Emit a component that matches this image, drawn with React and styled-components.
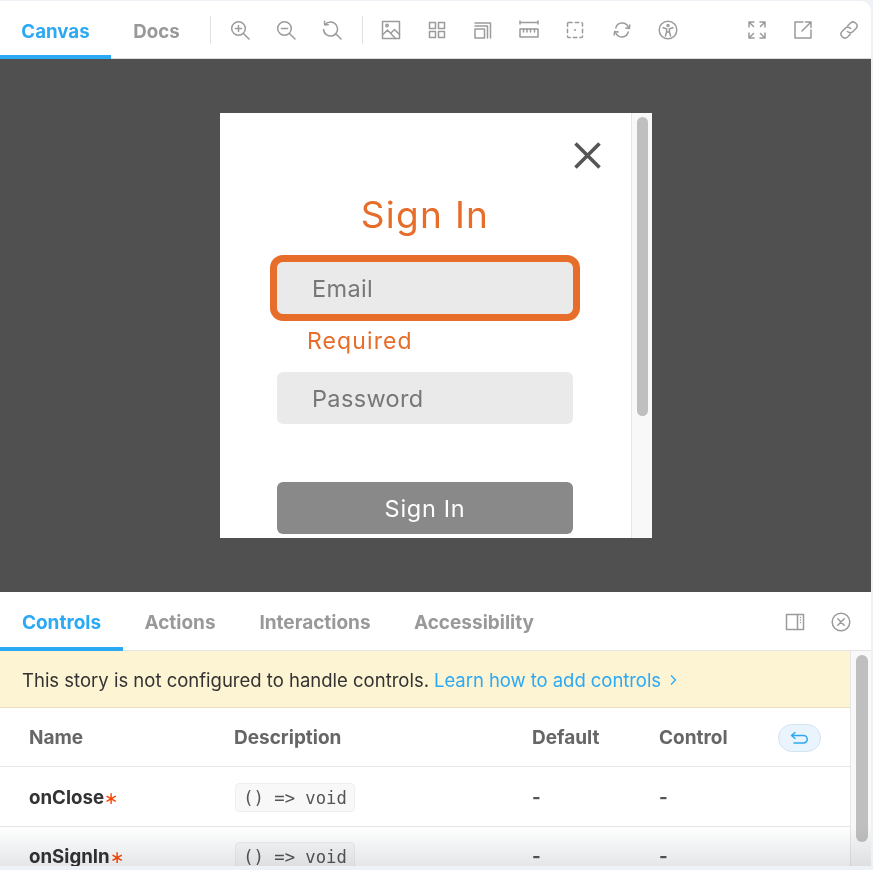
import React from 'react';
import styled, { createGlobalStyle } from 'styled-components';

const GlobalStyle = createGlobalStyle`
  html, body {
    margin: 0;
    padding: 0;
    background: #eef1f5;
  }
  * { box-sizing: border-box; }
`;

const UI_FONT = `Inter, "Open Sans", sans-serif`;
const FORM_FONT = `Inter, "Noto Sans", sans-serif`;

const Page = styled.div`
  width: 873px;
  height: 870px;
  padding: 1px 2px 4px 0;
  display: flex;
  flex-direction: column;
  font-family: ${UI_FONT};
  overflow: hidden;
`;

const Toolbar = styled.div`
  height: 58px;
  flex-shrink: 0;
  display: flex;
  align-items: stretch;
  background: #fff;
  border-top-right-radius: 10px;
  border-bottom: 1px solid #dcdcdc;
`;

const Tab = styled.div`
  flex-shrink: 0;
  display: flex;
  align-items: center;
  justify-content: center;
  width: ${p => p.$w}px;
  font-size: ${p => p.$size || 18.7}px;
  font-weight: 700;
  padding-top: ${p => p.$drop}px;
  color: ${p => (p.$active ? '#2ca9f5' : '#999')};
  border-bottom: 4px solid ${p => (p.$active ? '#2ca9f5' : 'transparent')};
  margin-bottom: -1px;
`;

const Divider = styled.span`
  flex-shrink: 0;
  align-self: center;
  width: 1px;
  height: 28px;
  background: #e2e2e2;
  margin-left: ${p => p.$before || 0}px;
`;

const Tools = styled.div`
  flex-shrink: 0;
  display: flex;
  align-items: center;
  margin-left: ${p => p.$left || 0}px;
`;

const Tool = styled.span`
  flex-shrink: 0;
  width: 46.2px;
  display: flex;
  justify-content: center;
  color: #9b9b9b;
  svg {
    width: 20px;
    height: 20px;
    fill: none;
    stroke: currentColor;
    stroke-width: 1.5;
    stroke-linecap: round;
    stroke-linejoin: round;
  }
`;

const Canvas = styled.div`
  flex: 1;
  display: flex;
  align-items: center;
  justify-content: center;
  background: #505050;
`;

const Frame = styled.div`
  width: 432px;
  height: 425px;
  display: flex;
  background: #fff;
  overflow: hidden;
`;

const FrameBody = styled.div`
  flex: 1;
  display: flex;
  flex-direction: column;
  align-items: center;
  padding-top: 29px;
  font-family: ${FORM_FONT};
`;

const CloseBtn = styled.button`
  align-self: flex-end;
  width: 27px;
  height: 27px;
  margin-right: 30px;
  padding: 0;
  border: 0;
  background: none;
  color: #555;
  svg { display: block; width: 27px; height: 27px; }
`;

const Title = styled.h1`
  margin: 24px 0 25px;
  font-size: 37px;
  line-height: 44px;
  font-weight: 400;
  letter-spacing: 1.3px;
  color: #e76d2b;
`;

const Form = styled.form`
  width: 296px;
  display: flex;
  flex-direction: column;
`;

const Field = styled.input`
  width: 100%;
  height: 52px;
  border: 0;
  border-radius: 6px;
  padding: 0 0 0 35px;
  background: #eaeaea;
  font-family: inherit;
  font-size: 23.5px;
  letter-spacing: 0.35px;
  outline: ${p => (p.$invalid ? '7px solid #e76d2b' : 'none')};
  margin-top: ${p => p.$top || 0}px;
  &::placeholder { color: #777; opacity: 1; }
`;

const ErrorText = styled.div`
  margin: 12px 0 0 30px;
  line-height: 30px;
  font-size: 23px;
  letter-spacing: 1.1px;
  color: #e76d2b;
`;

const SubmitBtn = styled.button`
  width: 100%;
  height: 52px;
  flex-shrink: 0;
  margin-top: 58px;
  border: 0;
  border-radius: 6px;
  background: #898989;
  color: #fff;
  font-family: inherit;
  font-size: 23.5px;
  letter-spacing: 0.7px;
`;

const FrameScroll = styled.div`
  width: 21px;
  flex-shrink: 0;
  padding: 4px 0 0 5px;
  background: #f8f8f8;
  border-left: 1px solid #e6e6e6;
`;

const Thumb = styled.div`
  width: ${p => p.$w}px;
  height: ${p => p.$h}px;
  border-radius: 6px;
  background: #bfbfbf;
`;

const Panel = styled.div`
  height: 274px;
  flex-shrink: 0;
  display: flex;
  flex-direction: column;
  position: relative;
  background: #fff;
  overflow: hidden;
`;

const PanelTabs = styled.div`
  height: 59px;
  flex-shrink: 0;
  display: flex;
  align-items: stretch;
  border-bottom: 1px solid #e4e4e4;
`;

const PanelActions = styled.div`
  margin-left: auto;
  display: flex;
  align-items: center;
  padding: 1px 7px 0 0;
`;

const PanelBody = styled.div`
  flex: 1;
  display: flex;
  min-height: 0;
`;

const Main = styled.div`
  flex: 1;
  min-width: 0;
`;

const Banner = styled.div`
  height: 57px;
  padding: 2px 0 0 22px;
  display: flex;
  align-items: center;
  background: #fdf4d3;
  border-bottom: 1px solid #ecdfb9;
  font-size: 18.5px;
  color: #333;
`;

const BannerLink = styled.a`
  margin-left: 5px;
  color: #2ca9f5;
  display: inline-flex;
  align-items: center;
  letter-spacing: -0.05px;
  svg {
    margin-left: 8px;
    width: 9px;
    height: 12px;
    fill: none;
    stroke: currentColor;
    stroke-width: 1.3;
  }
`;

const Row = styled.div`
  display: grid;
  grid-template-columns: 205px 298px 127px 119px 1fr;
  align-items: center;
  height: ${p => p.$h}px;
  padding: ${p => (p.$head ? 1 : 2)}px 0 0 29px;
  border-bottom: 1px solid #e6e6e6;
  color: ${p => (p.$head ? '#666' : '#333')};
  font-size: ${p => (p.$head ? 19 : 18.7)}px;
  font-weight: ${p => (p.$head ? 700 : 400)};
`;

const PropName = styled.span`
  font-weight: 700;
  color: #333;
`;

const Required = styled.span`
  color: #ff4400;
  font-size: 17px;
  font-weight: 300;
`;

const Code = styled.code`
  justify-self: start;
  margin-left: 1px;
  width: 120px;
  height: 29px;
  padding-top: 1px;
  display: flex;
  align-items: center;
  justify-content: center;
  font-family: "DejaVu Sans Mono", "Liberation Mono", monospace;
  font-size: 17.2px;
  color: #555;
  background: #f8f8f8;
  border: 1px solid #eeeeee;
  border-radius: 4px;
`;

const ResetBtn = styled.button`
  width: 43px;
  height: 28px;
  padding: 0;
  display: flex;
  align-items: center;
  justify-content: center;
  background: #e9f4fd;
  border: 1px solid #d5e3ef;
  border-radius: 14px;
  color: #2ca9f5;
  svg {
    width: 19px;
    height: 14px;
    fill: none;
    stroke: currentColor;
    stroke-width: 1.5;
    stroke-linecap: round;
    stroke-linejoin: round;
  }
`;

const Dash = styled.span`
  color: #555;
  font-weight: 700;
`;

const PanelScroll = styled.div`
  width: 21px;
  flex-shrink: 0;
  padding: 4px 0 0 5px;
  background: #f8f8f8;
  border-left: 1px solid #e6e6e6;
`;

const BottomFade = styled.div`
  position: absolute;
  left: 0;
  right: 0;
  bottom: 0;
  height: 40px;
  background: linear-gradient(to bottom, #ffffff, #e4e6e8);
  mix-blend-mode: multiply;
  pointer-events: none;
`;

const icons = {
  zoomIn: <><circle cx="8.5" cy="8.5" r="6.8" /><path d="M13.5 13.5l5.5 5.5M8.5 5.5v6M5.5 8.5h6" /></>,
  zoomOut: <><circle cx="8.5" cy="8.5" r="6.8" /><path d="M13.5 13.5l5.5 5.5M5.5 8.5h6" /></>,
  zoomReset: <><path d="M3.2 4.600a7 7 0 1 1-1.600 5" /><path d="M2.600 1.200v3.600h3.600M14 14l5 5" /></>,
  image: <><rect x="1.500" y="1.500" width="17" height="17" /><path d="M1.500 15l5-5 8 8.500M10.500 12.500l3-3 5 5" /><circle cx="6" cy="5.500" r="1.200" /></>,
  grid: <><rect x="2.500" y="2.500" width="6" height="6" /><rect x="11.500" y="2.500" width="6" height="6" /><rect x="2.500" y="11.500" width="6" height="6" /><rect x="11.500" y="11.500" width="6" height="6" /></>,
  outline: <><rect x="2" y="9" width="9.500" height="9" /><path d="M2 6h12.500v12M2 3h15.500v15" /></>,
  ruler: <><path d="M1 2.500h18M1 1v3M19 1v3" /><rect x="1" y="9" width="18" height="8" /><path d="M4.500 9v3M8 9v3M11.500 9v3M15.500 9v3" /></>,
  measure: <><rect x="2.500" y="2.500" width="15" height="15" rx="1" strokeDasharray="3.600 3.100" /><path d="M10 10h.01" strokeWidth="2" /></>,
  sync: <><path d="M3.800 8a6.600 6.600 0 0 1 12.500-.8M16.200 12a6.600 6.600 0 0 1-12.500.8" /><path d="M13.800 8l3.600.4.4-3.400M6.200 12l-3.600-.4-.4 3.400" /></>,
  a11y: <><circle cx="10" cy="10" r="8.800" /><circle cx="10" cy="5.500" r="1" /><path d="M5 7.800l3.600 1v3L7.400 16M15 7.800l-3.600 1v3l1.200 4.200M8.600 12h2.800" /></>,
  expand: <><path d="M2 7V2h5M2 2l4.500 4.500M13 2h5v5M18 2l-4.500 4.500M2 13v5h5M2 18l4.500-4.500M18 13v5h-5M18 18l-4.500-4.500" /></>,
  share: <><path d="M10 2H2v16h16v-8" /><path d="M9 11l9-9M12.500 2H18v5.500" /></>,
  link: <><path d="M8.500 6l3-3a3.900 3.900 0 0 1 5.500 5.500l-3 3a3.900 3.900 0 0 1-5.500 0" /><path d="M11.500 14l-3 3A3.900 3.900 0 0 1 3 11.500l3-3a3.900 3.900 0 0 1 5.500 0" /></>,
  sidebar: <><rect x="1.500" y="2.500" width="17" height="15" /><path d="M12.500 2.500v15" /><path d="M15.500 5.500h.01M15.500 8h.01M15.500 10.500h.01" /></>,
  closeCircle: <><circle cx="10" cy="10" r="8.800" /><path d="M6.800 6.800l6.400 6.400M13.200 6.800l-6.400 6.400" /></>,
};

const Icon = ({ name }) => (
  <Tool>
    <svg viewBox="0 0 20 20">{icons[name]}</svg>
  </Tool>
);

const SignInModal = () => (
  <Frame>
    <FrameBody>
      <CloseBtn type="button" aria-label="Close">
        <svg viewBox="0 0 27 27">
          <path d="M1.500 1.500l24 24M25.500 1.500l-24 24" stroke="currentColor" strokeWidth="3.600" />
        </svg>
      </CloseBtn>
      <Title>Sign In</Title>
      <Form>
        <Field placeholder="Email" $invalid />
        <ErrorText>Required</ErrorText>
        <Field placeholder="Password" $top={16} />
        <SubmitBtn type="button">Sign In</SubmitBtn>
      </Form>
    </FrameBody>
    <FrameScroll>
      <Thumb $w={11} $h={299} />
    </FrameScroll>
  </Frame>
);

const PropRow = ({ name }) => (
  <Row $h={59.5}>
    <PropName>{name}<Required>∗</Required></PropName>
    <Code>{'() => void'}</Code>
    <Dash>-</Dash>
    <Dash>-</Dash>
  </Row>
);

export default function App() {
  return (
    <>
      <GlobalStyle />
      <Page>
        <Toolbar>
          <Tab $w={111} $drop={6} $active>Canvas</Tab>
          <Tab $w={91} $drop={6}>Docs</Tab>
          <Divider $before={8} />
          <Tools $left={6}>
            <Icon name="zoomIn" />
            <Icon name="zoomOut" />
            <Icon name="zoomReset" />
          </Tools>
          <Divider $before={6} />
          <Tools $left={5}>
            <Icon name="image" />
            <Icon name="grid" />
            <Icon name="outline" />
            <Icon name="ruler" />
            <Icon name="measure" />
            <Icon name="sync" />
            <Icon name="a11y" />
          </Tools>
          <Tools $left={43}>
            <Icon name="expand" />
            <Icon name="share" />
            <Icon name="link" />
          </Tools>
        </Toolbar>

        <Canvas>
          <SignInModal />
        </Canvas>

        <Panel>
          <PanelTabs>
            <Tab $w={123} $size={19} $drop={5} $active>Controls</Tab>
            <Tab $w={114} $size={19} $drop={5}>Actions</Tab>
            <Tab $w={156} $size={19} $drop={5}>Interactions</Tab>
            <Tab $w={162} $size={19} $drop={5}>Accessibility</Tab>
            <PanelActions>
              <Icon name="sidebar" />
              <Icon name="closeCircle" />
            </PanelActions>
          </PanelTabs>
          <PanelBody>
            <Main>
              <Banner>
                This story is not configured to handle controls.
                <BannerLink>
                  Learn how to add controls
                  <svg viewBox="0 0 9 12"><path d="M2 1.500l4.500 4.500L2 10.500" /></svg>
                </BannerLink>
              </Banner>
              <Row $head $h={59}>
                <span>Name</span>
                <span>Description</span>
                <span>Default</span>
                <span>Control</span>
                <ResetBtn type="button" aria-label="Reset controls">
                  <svg viewBox="0 0 19 14">
                    <path d="M5 1.500L1.500 4.500 5 7.500M1.500 4.500h12a3.500 3.500 0 0 1 0 7.500H4" />
                  </svg>
                </ResetBtn>
              </Row>
              <PropRow name="onClose" />
              <PropRow name="onSignIn" />
            </Main>
            <PanelScroll>
              <Thumb $w={12} $h={187} />
            </PanelScroll>
          </PanelBody>
          <BottomFade />
        </Panel>
      </Page>
    </>
  );
}
